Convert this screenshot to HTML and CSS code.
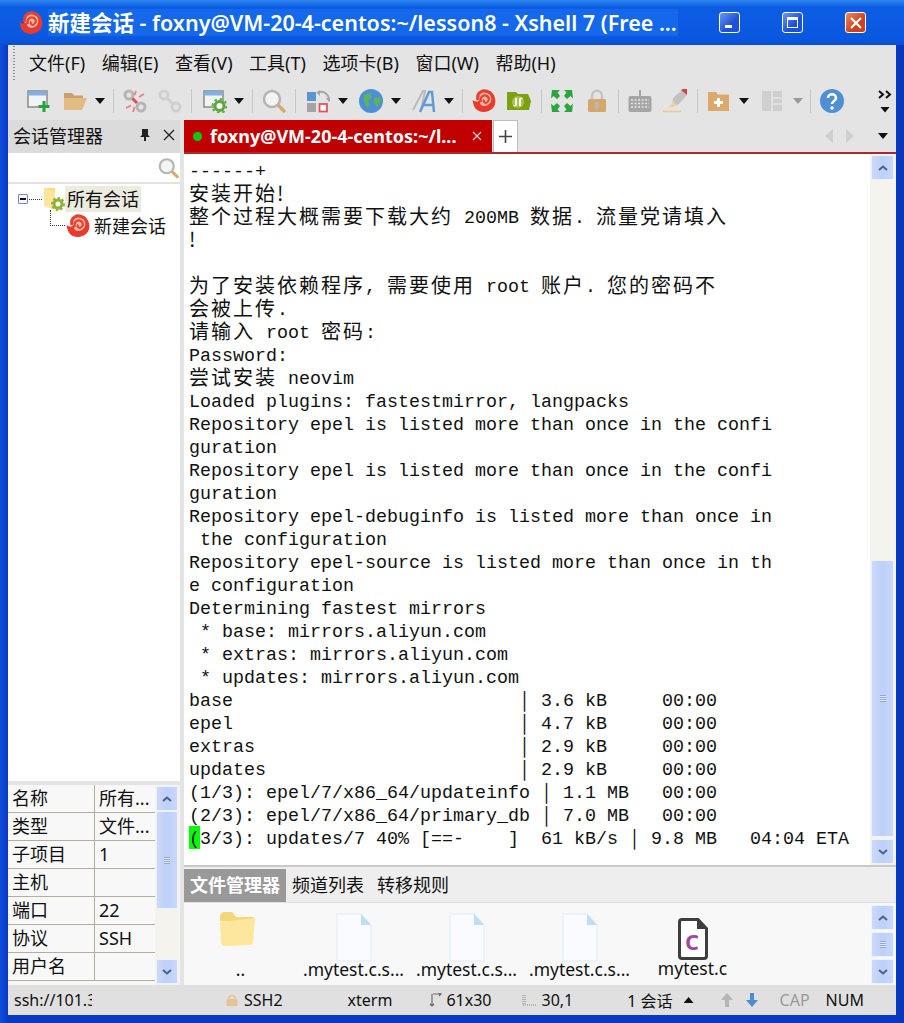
FILE: index.html
```html
<!DOCTYPE html>
<html lang="zh-CN">
<head>
<meta charset="utf-8">
<title>Xshell 7</title>
<link rel="stylesheet" href="styles.css">
</head>
<body>
<svg class="defs" width="0" height="0">
  <symbol id="swirl" viewBox="0 0 24 24">
    <circle cx="13" cy="9" r="8" fill="#f6b9a8"/>
    <path d="M0.500 11C3 13 6 13 8 11L8 14C9 18 15 18 18 14C20 11 20 7 16 4L18 2C24 6 25 14 21 19C16 24 8 24 4 20C2 18 1 14 0.500 11Z" fill="#e93a2c"/>
    <path d="M18 4C11 -1 4 4 6 11" fill="none" stroke="#ea4030" stroke-width="3"/>
    <path d="M9 13C7 8 12 5 15 7C18 9 17 13 14 14C12 14 11 12 12 10.500" fill="none" stroke="#ea4030" stroke-width="2.200"/>
  </symbol>
  <symbol id="chev-up" viewBox="0 0 12 8"><path d="M2 6L6 2.500L10 6" fill="none" stroke="#4d6185" stroke-width="2"/></symbol>
  <symbol id="chev-down" viewBox="0 0 12 8"><path d="M2 2L6 5.500L10 2" fill="none" stroke="#4d6185" stroke-width="2"/></symbol>
  <symbol id="grip" viewBox="0 0 8 9"><path d="M1 1.500H7M1 3.500H7M1 5.500H7M1 7.500H7" stroke="#8ea6dc" stroke-width="1"/><path d="M1 2.500H7M1 4.500H7M1 6.500H7" stroke="#e2e9fb" stroke-width="1"/></symbol>
  <symbol id="doc" viewBox="0 0 36 50">
    <path d="M1 1H25L35 12V48H1Z" fill="#f9fbfe" stroke="#e6f0fa" stroke-width="1.500"/>
    <path d="M25 1L35 12H25Z" fill="#bcdef6"/>
  </symbol>
</svg>

<div class="window">
  <header class="titlebar">
    <svg class="title-logo"><use href="#swirl"/></svg>
    <span class="title-text">新建会话 - foxny@VM-20-4-centos:~/lesson8 - Xshell 7 (Free ...</span>
    <div class="win-buttons">
      <button class="win-btn"><span class="glyph-min"></span></button>
      <button class="win-btn"><span class="glyph-max"></span></button>
      <button class="win-btn win-close"><svg viewBox="0 0 12 12" class="glyph-x"><path d="M1 1L11 11M11 1L1 11" stroke="#fff" stroke-width="2.200"/></svg></button>
    </div>
  </header>

  <div class="frame">
    <nav class="menubar">
      <span class="menu-item">文件(F)</span>
      <span class="menu-item">编辑(E)</span>
      <span class="menu-item">查看(V)</span>
      <span class="menu-item">工具(T)</span>
      <span class="menu-item">选项卡(B)</span>
      <span class="menu-item">窗口(W)</span>
      <span class="menu-item">帮助(H)</span>
    </nav>

    <div class="toolbar">
      <svg class="ti" viewBox="0 0 24 24"><rect x="1" y="2" width="19" height="16" fill="#f3f3f3" stroke="#8b8b8b" stroke-width="1.500"/><rect x="1.500" y="2.500" width="18" height="4" fill="#7fb2e5"/><path d="M17 12V23M11.500 17.500H22.500" stroke="#22a53a" stroke-width="3"/></svg>
      <svg class="ti g12" viewBox="0 0 24 24"><path d="M1 4H9L11 6.500H20V10H1Z" fill="#c9a06a"/><path d="M1 21V9H24L19 21Z" fill="#e2bb85"/></svg>
      <i class="caret g8"></i>
      <i class="sep g8"></i>
      <svg class="ti g9" viewBox="0 0 24 24"><g fill="none" stroke="#b5b5b5" stroke-width="3"><circle cx="6" cy="6" r="4"/><circle cx="18" cy="18" r="4"/></g><path d="M13 2L11.500 6M21 5L16 8M3 19L8 16.500M10 23L11.500 18" stroke="#f07a80" stroke-width="1.800"/><path d="M9.500 9.500L14 14" stroke="#ef4a55" stroke-width="3"/></svg>
      <svg class="ti g11" viewBox="0 0 24 24"><g fill="none" stroke="#d0d0d0" stroke-width="3"><circle cx="6" cy="6" r="4"/><circle cx="18" cy="18" r="4"/><path d="M9 9L15 15"/></g></svg>
      <i class="sep g9"></i>
      <svg class="ti g11" viewBox="0 0 24 24"><rect x="1" y="2" width="19" height="16" fill="#f3f3f3" stroke="#8b8b8b" stroke-width="1.500"/><rect x="1.500" y="2.500" width="18" height="4" fill="#7fb2e5"/><circle cx="16.500" cy="17" r="4.500" fill="#fff" stroke="#5aa83c" stroke-width="3"/><circle cx="16.500" cy="17" r="7" fill="none" stroke="#5aa83c" stroke-width="2" stroke-dasharray="2.500 3"/></svg>
      <i class="caret g7"></i>
      <i class="sep g8"></i>
      <svg class="ti g9" viewBox="0 0 24 24"><circle cx="10" cy="10" r="8" fill="#f4f4f4" stroke="#b5b5b5" stroke-width="2.500"/><path d="M16 16L23 23" stroke="#dca870" stroke-width="3.500"/></svg>
      <i class="sep g9"></i>
      <svg class="ti g10" viewBox="0 0 24 24"><rect x="1" y="3" width="9" height="9" fill="#5b93d3"/><rect x="1" y="14" width="9" height="9" fill="#a4a4a4"/><rect x="13.500" y="15" width="7.500" height="7.500" fill="#fff" stroke="#e8525a" stroke-width="1.800"/><path d="M11 4C16 1 22 4 23 10" fill="none" stroke="#a4a4a4" stroke-width="1.800"/><path d="M20 9H26L23 13Z" fill="#a4a4a4"/><path d="M11 4L14 1V7Z" fill="#a4a4a4"/></svg>
      <i class="caret g8"></i>
      <svg class="ti g11" viewBox="0 0 24 24"><circle cx="12" cy="12" r="12" fill="#4d8fd6"/><path d="M5 6L11 4L13 8L9 12L11 16L8 19L5 12Z" fill="#5fb35a"/><path d="M15 9L21 8L22 13L18 18L15 14Z" fill="#5fb35a"/></svg>
      <i class="caret g8"></i>
      <svg class="ti g11" viewBox="0 0 24 24"><path d="M1 21L11 2H13L9 21" fill="none" stroke="#b8b8b8" stroke-width="1.800"/><path d="M8 23L17 3H20L22 23M12 16H21" fill="none" stroke="#5f9bd8" stroke-width="2.500"/></svg>
      <i class="caret g8"></i>
      <i class="sep g8"></i>
      <svg class="ti g9"><use href="#swirl"/></svg>
      <svg class="ti g11" viewBox="0 0 24 24"><path d="M0 3H9L11 5H21L24 12L22 21H0Z" fill="#7da112"/><circle cx="11" cy="13" r="6" fill="#a8c34f"/><path d="M9 9V15C9 17 7 17 7 16M13 17V11C13 9 15 9 15 10" fill="none" stroke="#fff" stroke-width="1.800"/></svg>
      <i class="sep g10"></i>
      <svg class="ti g8" viewBox="0 0 24 24"><g fill="#2ba53e"><path d="M2 1H10L7.500 3.500L10 7L7 10L3.500 7L1 9.500Z"/><path d="M22 1H14L16.500 3.500L14 7L17 10L20.500 7L23 9.500Z"/><path d="M2 23H10L7.500 20.500L10 17L7 14L3.500 17L1 14.500Z"/><path d="M22 23H14L16.500 20.500L14 17L17 14L20.500 17L23 14.500Z"/></g></svg>
      <svg class="ti g11" viewBox="0 0 24 24"><path d="M7 11V7C7 0 17 0 17 7V11" fill="none" stroke="#c4c4c4" stroke-width="2.500"/><rect x="3" y="10" width="18" height="13" rx="1.500" fill="#d6a76a"/><rect x="10" y="13" width="4" height="7" rx="2" fill="#b9b9b9"/></svg>
      <i class="sep g9"></i>
      <svg class="ti g9" viewBox="0 0 24 24"><path d="M12 1V7" stroke="#8e8e8e" stroke-width="1.500"/><rect x="0.500" y="7" width="23" height="16" rx="2" fill="#a5a5a5"/><path d="M3 11H21M3 14.500H21M3 18H21" stroke="#e6e6e6" stroke-dasharray="2 1.500" stroke-width="1.500"/></svg>
      <svg class="ti g11" viewBox="0 0 24 24"><path d="M10 9L19 1L24 6L16 15L9 18Z" fill="#c2c2c2"/><path d="M18 1L20 0H24V6Z" fill="#e2393c"/><path d="M6 19L10 12L14 16Z" fill="#f0cda2"/><path d="M0 22.500H18" stroke="#f2c892" stroke-width="1.500"/></svg>
      <i class="sep g10"></i>
      <svg class="ti g9" viewBox="0 0 24 24"><path d="M1 3H9L11 5.500H22V22H1Z" fill="#dca96c"/><path d="M11.500 9V18M7 13.500H16" stroke="#fff" stroke-width="3"/></svg>
      <i class="caret g8"></i>
      <svg class="ti g11" viewBox="0 0 24 24"><rect x="2" y="2" width="20" height="20" fill="#cfcfcf"/><path d="M12 2V22M12 9H22M12 15H22" stroke="#e6e6e6" stroke-width="1.500"/></svg>
      <i class="caret caret-off g9"></i>
      <i class="sep g7"></i>
      <svg class="ti g9" viewBox="0 0 24 24"><circle cx="12" cy="12" r="12" fill="#4f8fd4"/><path d="M8 9C8 4 16 4 16 9C16 12 12 12 12 15" fill="none" stroke="#fff" stroke-width="2.600"/><circle cx="12" cy="19" r="1.700" fill="#fff"/></svg>
      <div class="overflow">
        <svg viewBox="0 0 14 9" class="more"><path d="M1 1L5 4.500L1 8M8 1L12 4.500L8 8" fill="none" stroke="#111" stroke-width="2"/></svg>
        <i class="caret"></i>
      </div>
    </div>

    <div class="workspace">
      <aside class="side">
        <div class="side-head">
          <span>会话管理器</span>
          <svg class="pin" viewBox="0 0 12 14"><path d="M3 1H9V7L11 9H7V13H5V9H1L3 7Z" fill="#222"/></svg>
          <svg class="side-x" viewBox="0 0 12 12"><path d="M1 1L11 11M11 1L1 11" stroke="#222" stroke-width="1.300"/></svg>
        </div>
        <div class="side-search">
          <svg class="search-ico" viewBox="0 0 24 24"><circle cx="10" cy="10" r="8" fill="#f4f4f4" stroke="#b5b5b5" stroke-width="2.500"/><path d="M16 16L23 23" stroke="#dca870" stroke-width="3.500"/></svg>
        </div>
        <div class="tree">
          <div class="tree-row">
            <span class="expander"></span>
            <span class="dots"></span>
            <svg class="folder-gear" viewBox="0 0 22 24"><path d="M1 1H12V19H1Z" fill="#f9dc7c"/><path d="M1 1L12 5V23L1 19Z" fill="#fbe69c"/><circle cx="15" cy="17" r="4" fill="#fff" stroke="#8fb335" stroke-width="3"/><circle cx="15" cy="17" r="6" fill="none" stroke="#8fb335" stroke-width="2" stroke-dasharray="2.500 2"/></svg>
            <span class="tree-label is-selected">所有会话</span>
          </div>
          <div class="tree-row tree-child">
            <span class="elbow"></span>
            <svg class="tree-logo"><use href="#swirl"/></svg>
            <span class="tree-label">新建会话</span>
          </div>
        </div>
        <div class="props">
          <div class="prop-table">
            <div class="prop-row"><span class="pk">名称</span><span class="pv">所有...</span></div>
            <div class="prop-row"><span class="pk">类型</span><span class="pv">文件...</span></div>
            <div class="prop-row"><span class="pk">子项目</span><span class="pv">1</span></div>
            <div class="prop-row"><span class="pk">主机</span><span class="pv"></span></div>
            <div class="prop-row"><span class="pk">端口</span><span class="pv">22</span></div>
            <div class="prop-row"><span class="pk">协议</span><span class="pv">SSH</span></div>
            <div class="prop-row"><span class="pk">用户名</span><span class="pv"></span></div>
          </div>
          <div class="sb sb-props">
            <div class="sb-btn"><svg class="chev"><use href="#chev-up"/></svg></div>
            <div class="sb-thumb thumb-props"><svg class="grip"><use href="#grip"/></svg></div>
            <div class="sb-track"></div>
            <div class="sb-btn"><svg class="chev"><use href="#chev-down"/></svg></div>
          </div>
        </div>
      </aside>

      <main class="main">
        <div class="tabbar">
          <div class="tab">
            <i class="dot"></i>
            <span class="tab-title">foxny@VM-20-4-centos:~/l...</span>
            <svg class="tab-x" viewBox="0 0 10 10"><path d="M1 1L9 9M9 1L1 9" stroke="#f0d0d0" stroke-width="1.200"/></svg>
          </div>
          <div class="tab-new"><svg viewBox="0 0 13 13" class="plus"><path d="M6.500 0V13M0 6.500H13" stroke="#444" stroke-width="1.600"/></svg></div>
          <div class="tab-nav">
            <i class="nav-left"></i>
            <i class="nav-right"></i>
            <i class="caret nav-caret"></i>
          </div>
        </div>

        <div class="term-area">
          <div class="term">
            <div class="l">------+</div>
            <div class="l"><span class="c">安装开始!</span></div>
            <div class="l"><span class="c">整个过程大概需要下载大约</span> 200MB <span class="c">数据</span>. <span class="c">流量党请填入</span></div>
            <div class="l"><span class="c">!</span></div>
            <div class="l"></div>
            <div class="l"><span class="c">为了安装依赖程序</span>, <span class="c">需要使用</span> root <span class="c">账户</span>. <span class="c">您的密码不</span></div>
            <div class="l"><span class="c">会被上传</span>.</div>
            <div class="l"><span class="c">请输入</span> root <span class="c">密码</span>:</div>
            <div class="l">Password:</div>
            <div class="l"><span class="c">尝试安装</span> neovim</div>
            <div class="l">Loaded plugins: fastestmirror, langpacks</div>
            <div class="l">Repository epel is listed more than once in the confi</div>
            <div class="l">guration</div>
            <div class="l">Repository epel is listed more than once in the confi</div>
            <div class="l">guration</div>
            <div class="l">Repository epel-debuginfo is listed more than once in</div>
            <div class="l"> the configuration</div>
            <div class="l">Repository epel-source is listed more than once in th</div>
            <div class="l">e configuration</div>
            <div class="l">Determining fastest mirrors</div>
            <div class="l"> * base: mirrors.aliyun.com</div>
            <div class="l"> * extras: mirrors.aliyun.com</div>
            <div class="l"> * updates: mirrors.aliyun.com</div>
            <div class="l">base                          │ 3.6 kB     00:00</div>
            <div class="l">epel                          │ 4.7 kB     00:00</div>
            <div class="l">extras                        │ 2.9 kB     00:00</div>
            <div class="l">updates                       │ 2.9 kB     00:00</div>
            <div class="l">(1/3): epel/7/x86_64/updateinfo │ 1.1 MB   00:00</div>
            <div class="l">(2/3): epel/7/x86_64/primary_db │ 7.0 MB   00:00</div>
            <div class="l"><span class="cursor">(</span>3/3): updates/7 40% [==-    ]  61 kB/s │ 9.8 MB   04:04 ETA</div>
          </div>
          <div class="sb sb-term">
            <div class="sb-btn"><svg class="chev"><use href="#chev-up"/></svg></div>
            <div class="sb-track"></div>
            <div class="sb-thumb thumb-term"><svg class="grip"><use href="#grip"/></svg></div>
            <div class="sb-btn"><svg class="chev"><use href="#chev-down"/></svg></div>
          </div>
        </div>

        <div class="ftabs">
          <span class="ftab is-active">文件管理器</span>
          <span class="ftab">频道列表</span>
          <span class="ftab">转移规则</span>
        </div>

        <div class="files">
          <div class="file-list">
            <div class="file">
              <svg class="file-ico folder-big" viewBox="0 0 38 38"><path d="M1 8C1 5 3 3 6 3H13L17 8H33C35 8 36 9 36 11V12H1Z" fill="#f5d77a"/><path d="M1 13L36 9L34 33C34 35 33 36 31 36L6 37C3 37 2 35 2 33Z" fill="#fce79c"/></svg>
              <span class="file-name">..</span>
            </div>
            <div class="file">
              <svg class="file-ico doc"><use href="#doc"/></svg>
              <span class="file-name">.mytest.c.s...</span>
            </div>
            <div class="file">
              <svg class="file-ico doc"><use href="#doc"/></svg>
              <span class="file-name">.mytest.c.s...</span>
            </div>
            <div class="file">
              <svg class="file-ico doc"><use href="#doc"/></svg>
              <span class="file-name">.mytest.c.s...</span>
            </div>
            <div class="file">
              <svg class="file-ico cfile" viewBox="0 0 30 42"><path d="M4 1.500H20L28.500 10.500V38C28.500 39.500 27.500 40.500 26 40.500H4C2.500 40.500 1.500 39.500 1.500 38V4C1.500 2.500 2.500 1.500 4 1.500Z" fill="#fff" stroke="#3e3e3e" stroke-width="3"/><path d="M19 2V11H28Z" fill="#3e3e3e"/><text x="7" y="32" class="c-letter">C</text></svg>
              <span class="file-name">mytest.c</span>
            </div>
          </div>
          <div class="sb sb-files">
            <div class="sb-btn"><svg class="chev"><use href="#chev-up"/></svg></div>
            <div class="sb-btn"><svg class="grip"><use href="#grip"/></svg></div>
            <div class="sb-btn"><svg class="chev"><use href="#chev-down"/></svg></div>
          </div>
        </div>
      </main>
    </div>

    <footer class="status">
      <span class="st-addr">ssh://101.35.0.1</span>
      <svg class="st-lock" viewBox="0 0 12 12"><path d="M3 6V4C3 0.500 9 0.500 9 4V6" fill="none" stroke="#e5c593" stroke-width="1.500"/><rect x="0.500" y="5" width="11" height="7" rx="1" fill="#e5c593"/></svg>
      <span class="st-ssh">SSH2</span>
      <span class="st-term">xterm</span>
      <svg class="st-size" viewBox="0 0 14 14"><path d="M4 1V13M2 11L4 13L6 11M5 1H13M11 0L13 1L11 3" fill="none" stroke="#666" stroke-width="1.100"/></svg>
      <span class="st-dim">61x30</span>
      <svg class="st-pos" viewBox="0 0 14 12"><path d="M1 1V11M3 1V11M1 11H14" stroke="#888" stroke-dasharray="1 1"/></svg>
      <span class="st-rc">30,1</span>
      <span class="st-sess">1 会话</span>
      <i class="st-up"></i>
      <svg class="st-arrow a-up" viewBox="0 0 14 14"><path d="M7 0L13 7H9V14H5V7H1Z" fill="#b5b5b5"/></svg>
      <svg class="st-arrow a-down" viewBox="0 0 14 14"><path d="M7 14L13 7H9V0H5V7H1Z" fill="#4f8bd0"/></svg>
      <span class="st-cap">CAP</span>
      <span class="st-num">NUM</span>
    </footer>
  </div>
</div>
</body>
</html>
```

FILE: styles.css
```css
* { box-sizing: border-box; }
html, body { margin: 0; padding: 0; }
body {
  width: 904px;
  height: 1023px;
  overflow: hidden;
  font-family: "Noto Sans", "Noto Sans CJK SC", sans-serif;
  color: #111;
}
.defs { display: block; height: 0; }

.window {
  width: 904px;
  height: 1023px;
  display: flex;
  flex-direction: column;
  background: linear-gradient(90deg, #0f4fdc 0, #0a38c4 8px, #0a38c4 896px, #0b34b8 100%);
}

/* Title bar */
.titlebar {
  flex: 0 0 45px;
  display: flex;
  align-items: center;
  padding-left: 19px;
  background: linear-gradient(180deg, #2f86ee 0, #0d5de4 7px, #0a58e0 38px, #0b4fd4 100%);
}
.title-logo { width: 24px; height: 24px; flex: none; }
.title-text {
  width: 630px;
  margin-left: 5px;
  height: 27px;
  line-height: 27px;
  font-size: 21.5px;
  font-weight: 600;
  color: #fff;
  white-space: nowrap;
  overflow: hidden;
  background: #1568ea;
}
.win-buttons { display: flex; margin-left: 41px; gap: 42px; }
.win-btn {
  width: 21px;
  height: 21px;
  padding: 0;
  display: flex;
  align-items: center;
  justify-content: center;
  border: 1px solid #fff;
  border-radius: 3px;
  background: linear-gradient(135deg, #6b97ee, #1f50d8 60%);
}
.win-close { background: linear-gradient(135deg, #e98a64, #d0401c 60%); }
.glyph-min { width: 7px; height: 3px; background: #fff; margin: 8px 3px 0 0; }
.glyph-max { width: 11px; height: 11px; border: 1px solid #fff; border-top-width: 3px; }
.glyph-x { width: 12px; height: 12px; }

/* Frame */
.frame {
  flex: 1;
  margin: 0 8px 8px;
  display: flex;
  flex-direction: column;
  min-height: 0;
  background: #e4e4e4;
}

.menubar {
  flex: 0 0 37px;
  display: flex;
  align-items: center;
  padding: 0 0 2px 21px;
  gap: 16.5px;
  font-size: 18px;
  white-space: nowrap;
  background-image: radial-gradient(circle, #8d8d8d 0.8px, transparent 1px);
  background-size: 2px 3px;
  background-position: 5px 3px;
  background-repeat: repeat-y;
}
.menu-item { display: block; line-height: 24px; }

.toolbar {
  flex: 0 0 38px;
  display: flex;
  align-items: center;
  padding: 0 0 0 19px;
}
.ti { width: 24px; height: 24px; flex: none; }
.caret {
  flex: none;
  width: 10px;
  height: 6px;
  background: #111;
  clip-path: polygon(0 0, 100% 0, 50% 100%);
}
.caret-off { background: #9a9a9a; }
.sep { flex: none; width: 1px; height: 24px; background: #c8c8c8; }
.g7 { margin-left: 7px; }
.g8 { margin-left: 8px; }
.g9 { margin-left: 9px; }
.g10 { margin-left: 10px; }
.g11 { margin-left: 11px; }
.g12 { margin-left: 12px; }
.overflow {
  margin-left: auto;
  margin-right: 4px;
  width: 14px;
  display: flex;
  flex-direction: column;
  align-items: center;
  gap: 8px;
}
.more { width: 14px; height: 9px; }

/* Workspace */
.workspace { flex: 1; display: flex; min-height: 0; }

.side {
  flex: 0 0 172px;
  display: flex;
  flex-direction: column;
  min-height: 0;
  background: #fff;
}
.side-head {
  flex: 0 0 33px;
  display: flex;
  align-items: center;
  padding: 0 0 3px 5px;
  background: #dbdbdb;
  font-size: 18px;
}
.pin { width: 12px; height: 14px; margin-left: 36px; }
.side-x { width: 12px; height: 12px; margin-left: 12px; }
.side-search {
  flex: 0 0 31px;
  display: flex;
  justify-content: flex-end;
  align-items: center;
  padding-right: 1px;
  border-bottom: 2px solid #e2e2e2;
}
.search-ico { width: 21px; height: 22px; }

.tree { flex: 1; min-height: 0; font-size: 18px; }
.tree-row { display: flex; align-items: center; height: 26px; margin-top: 2px; }
.tree-row:first-child { padding-left: 10px; }
.expander {
  flex: none;
  width: 10px;
  height: 10px;
  border: 1px solid #6f8fb0;
  border-radius: 1px;
  background: linear-gradient(#111, #111) center / 6px 2px no-repeat, #f4f7fa;
}
.dots { flex: none; width: 13px; border-bottom: 1px dotted #333; margin-left: 1px; }
.folder-gear { width: 22px; height: 24px; margin-left: 1px; flex: none; }
.tree-label { padding: 0 2px; line-height: 26px; }
.is-selected { background: #ecebdf; }
.tree-child { padding-left: 42px; margin-top: 1px; }
.elbow {
  flex: none;
  width: 15px;
  height: 16px;
  margin: -16px 1px 0 0;
  border-left: 1px dotted #333;
  border-bottom: 1px dotted #333;
}
.tree-logo { width: 24px; height: 24px; flex: none; margin-right: 2px; }

.props {
  flex: 0 0 204px;
  display: flex;
  border-top: 4px solid #e4e4e4;
  background: #f8f8f8;
  overflow: hidden;
}
.prop-table { flex: 0 0 147px; font-size: 18px; }
.prop-row {
  display: flex;
  height: 28px;
  border-bottom: 1px solid #b5ae9f;
  line-height: 27px;
}
.pk { flex: 0 0 87px; padding-left: 4px; border-right: 1px solid #b5ae9f; }
.pv { flex: 1; padding-left: 4px; white-space: nowrap; overflow: hidden; }

/* Scrollbars */
.sb {
  flex: none;
  display: flex;
  flex-direction: column;
  background: #f4f3ee;
  padding: 1px 2px 1px 1px;
}
.sb-props { width: 25px; height: 200px; }
.sb-term { width: 26px; }
.sb-files { width: 26px; background: #f8f8f8; gap: 2px; padding-top: 2px; }
.sb-btn, .sb-thumb {
  border: 1px solid #eef2fc;
  border-radius: 2px;
  background: linear-gradient(90deg, #cbd9fa, #bed0f8 50%, #c8d7fb);
  display: flex;
  align-items: center;
  justify-content: center;
  flex: none;
}
.sb-btn { height: 25px; }
.sb-track { flex: 1; }
.thumb-props { height: 98px; }
.thumb-term { height: 277px; }
.sb-term .sb-btn:last-child { margin-top: 2px; }
.chev { width: 12px; height: 8px; }
.grip { width: 8px; height: 9px; }

/* Main */
.main { flex: 1; min-width: 0; display: flex; flex-direction: column; margin-left: 4px; }

.tabbar {
  flex: 0 0 34px;
  display: flex;
  align-items: stretch;
  border-bottom: 2px solid #a82a2a;
}
.tab {
  width: 308px;
  display: flex;
  align-items: center;
  padding-left: 9px;
  background: #c00000;
  color: #fff;
}
.dot { width: 9px; height: 9px; border-radius: 50%; background: #11c811; flex: none; }
.tab-title { margin-left: 8px; font-size: 18px; font-weight: 700; white-space: nowrap; width: 251px; overflow: hidden; }
.tab-x { width: 10px; height: 10px; margin-left: 11px; }
.tab-new {
  width: 25px;
  margin-left: 1px;
  background: #fff;
  border: 1px solid #bdbdbd;
  border-bottom: none;
  display: flex;
  align-items: center;
  justify-content: center;
}
.plus { width: 13px; height: 13px; }
.tab-nav { flex: 1; display: flex; align-items: center; justify-content: flex-end; padding-right: 8px; }
.nav-left, .nav-right { width: 8px; height: 14px; background: #cfcfcf; flex: none; }
.nav-left { clip-path: polygon(100% 0, 0 50%, 100% 100%); }
.nav-right { margin-left: 13px; clip-path: polygon(0 0, 100% 50%, 0 100%); }
.nav-caret { margin-left: 24px; }

.term-area { flex: 1; min-height: 0; display: flex; background: #fff; border-bottom: 2px solid #c9c9c9; }
.term {
  flex: 1;
  min-width: 0;
  padding: 7px 0 0 5px;
  font-family: "Liberation Mono", "Noto Sans CJK SC", monospace;
  font-size: 18.33px;
  color: #111;
  overflow: hidden;
}
.l { height: 23px; line-height: 23px; white-space: pre; }
.c { font-family: "Noto Sans CJK SC", sans-serif; font-size: 20px; letter-spacing: 2px; line-height: 0; vertical-align: -1px; }
.cursor { background: #00ff00; display: inline-block; width: 11px; height: 21px; box-shadow: 0 -2px 0 #00ff00; }

.ftabs {
  flex: 0 0 36px;
  display: flex;
  align-items: stretch;
  padding-top: 2px;
  background: #eee;
  border-bottom: 1px solid #e0e0e0;
  font-size: 18px;
}
.ftab { display: block; line-height: 33px; margin-right: 13px; }
.ftab.is-active { width: 102px; text-align: center; background: #999; color: #fff; font-weight: 700; margin-right: 6px; }

.files { flex: 0 0 82px; display: flex; background: #f8f8f8; }
.file-list { flex: 1; display: flex; min-width: 0; }
.file { width: 113px; display: flex; flex-direction: column; align-items: center; }
.file-ico { flex: none; }
.folder-big { width: 38px; height: 38px; margin: 6px 0 11px -6px; }
.doc { width: 36px; height: 50px; margin: 10px 0 -5px; }
.cfile { width: 30px; height: 42px; margin: 15px 0 -3px; }
.c-letter { font-family: "Open Sans", sans-serif; font-size: 22px; font-weight: 700; fill: #a0489a; }
.file-name { font-size: 17.5px; line-height: 22px; white-space: nowrap; }

/* Status bar */
.status {
  flex: 0 0 30px;
  display: flex;
  align-items: center;
  background: #e0e0e0;
  font-size: 16px;
  white-space: nowrap;
}
.st-addr { width: 78px; margin-left: 6px; overflow: hidden; }
.st-lock { width: 12px; height: 12px; margin-left: 134px; flex: none; }
.st-ssh { margin-left: 6px; }
.st-term { margin-left: 65px; }
.st-size { width: 14px; height: 14px; margin-left: 36px; flex: none; }
.st-dim { margin-left: 4px; }
.st-pos { width: 14px; height: 12px; margin-left: 30px; flex: none; }
.st-rc { margin-left: 6px; }
.st-sess { margin-left: 54px; }
.st-up { width: 10px; height: 6px; margin-left: 11px; background: #111; clip-path: polygon(50% 0, 100% 100%, 0 100%); }
.st-arrow { width: 14px; height: 14px; flex: none; }
.a-up { margin-left: 26px; }
.a-down { margin-left: 11px; }
.st-cap { margin-left: 21px; color: #999; }
.st-num { margin-left: 16px; }
```
